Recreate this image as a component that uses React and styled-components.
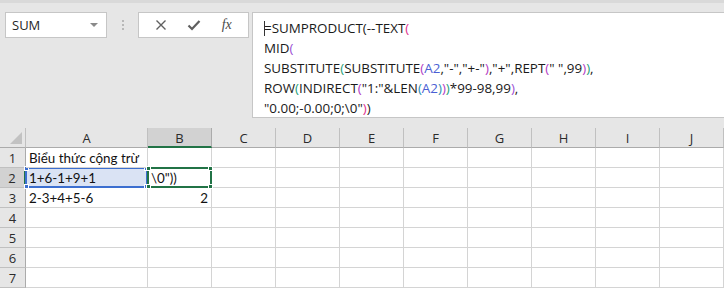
import styled, { createGlobalStyle } from "styled-components";

const GlobalStyle = createGlobalStyle`
  html, body {
    margin: 0;
    padding: 0;
    background: #ffffff;
  }
  * {
    box-sizing: border-box;
  }
`;

const UI_FONT = `"Open Sans", "Noto Sans", "DejaVu Sans", sans-serif`;
const CELL_FONT = `Lato, "Liberation Sans", sans-serif`;

const C_BLACK = "#1a1a1a";
const C_PINK = "#e0308e";
const C_PURPLE = "#9c4fd4";
const C_GREEN = "#1e9e78";
const C_VIOLET = "#b23ac4";
const C_TEAL = "#2d8fb0";
const C_REF = "#4b5fd4";

const Page = styled.div`
  width: 724px;
  height: 288px;
  overflow: hidden;
  background: #ffffff;
`;

const TopBar = styled.div`
  height: 128px;
  background: #e6e6e6;
  border-top: 3px solid #d9d9d9;
  display: flex;
  align-items: flex-start;
  padding: 9px 0 0 5px;
`;

const NameBox = styled.div`
  width: 102px;
  height: 26px;
  background: #ffffff;
  border: 1px solid #c6c6c6;
  display: flex;
  align-items: center;
  justify-content: space-between;
  padding: 0 6px 0 6px;
  font-family: ${UI_FONT};
  font-size: 13px;
  color: #262626;
`;

const DropArrow = styled.span`
  width: 0;
  height: 0;
  border-left: 4px solid transparent;
  border-right: 4px solid transparent;
  border-top: 4px solid #8a8a8a;
  margin-right: 2px;
`;

const Grip = styled.div`
  width: 31px;
  height: 26px;
  display: flex;
  flex-direction: column;
  align-items: center;
  justify-content: center;
  gap: 2px;

  span {
    width: 2px;
    height: 2px;
    background: #b8b8b8;
  }
`;

const FuncBox = styled.div`
  width: 111px;
  height: 26px;
  background: #ffffff;
  border: 1px solid #c6c6c6;
  display: flex;
  align-items: center;
  justify-content: space-around;
  padding: 0 6px;
`;

const FxLabel = styled.span`
  font-family: "Liberation Serif", serif;
  font-style: italic;
  font-size: 14px;
  color: #4a4a4a;
`;

const FormulaBox = styled.div`
  flex: 1;
  height: 106px;
  margin-left: 3px;
  background: #ffffff;
  border: 1px solid #c6c6c6;
  border-right: none;
  padding: 5px 0 0 11px;
  font-family: ${UI_FONT};
  font-size: 13.4px;
  color: ${C_BLACK};
`;

const FormulaLine = styled.div`
  height: 20px;
  line-height: 20px;
  white-space: pre;
  position: relative;
`;

const Caret = styled.span`
  position: absolute;
  left: 0;
  top: 3px;
  width: 1px;
  height: 15px;
  background: #333;
`;

const Tok = styled.span`
  color: ${(p) => p.$c || C_BLACK};
`;

const Sheet = styled.div`
  display: grid;
  grid-template-columns: 26px 122px repeat(9, 64px);
  grid-auto-rows: 20px;
`;

const Corner = styled.div`
  background: #e6e6e6;
  border-right: 1px solid #c0c0c0;
  border-bottom: 1px solid #ababab;
  position: relative;

  &::after {
    content: "";
    position: absolute;
    right: 3px;
    bottom: 3px;
    width: 0;
    height: 0;
    border-left: 12px solid transparent;
    border-bottom: 12px solid #c2c2c2;
  }
`;

const ColHead = styled.div`
  background: ${(p) => (p.$active ? "#d2d2d2" : "#e6e6e6")};
  border-right: 1px solid ${(p) => (p.$active ? "#ababab" : "#c0c0c0")};
  border-bottom: ${(p) => (p.$active ? "2px solid #217346" : "1px solid #ababab")};
  display: flex;
  align-items: center;
  justify-content: center;
  padding-top: ${(p) => (p.$active ? "1px" : "0")};
  font-family: ${UI_FONT};
  font-size: 13px;
  color: #2b2b2b;
`;

const RowHead = styled.div`
  background: ${(p) => (p.$active ? "#d2d2d2" : "#e6e6e6")};
  border-right: ${(p) => (p.$active ? "2px solid #217346" : "1px solid #ababab")};
  border-bottom: 1px solid #c0c0c0;
  display: flex;
  align-items: center;
  justify-content: center;
  font-family: ${UI_FONT};
  font-size: 13px;
  color: #2b2b2b;
`;

const Cell = styled.div`
  position: relative;
  background: ${(p) => (p.$refd ? "#dae3f4" : "#ffffff")};
  border-right: 1px solid #d4d4d4;
  border-bottom: 1px solid #d4d4d4;
  display: flex;
  align-items: flex-end;
  justify-content: ${(p) => (p.$right ? "flex-end" : "flex-start")};
  padding: 0 3px 1px 3px;
  font-family: ${CELL_FONT};
  font-size: 13.4px;
  color: #111;
  white-space: nowrap;
  overflow: visible;
  z-index: ${(p) => (p.$over ? 1 : 0)};
`;

const Frame = styled.div`
  position: absolute;
  left: -1px;
  top: -1px;
  right: -1px;
  bottom: -1px;
  border: 2px solid ${(p) => p.$color};
  pointer-events: none;

  span {
    position: absolute;
    width: 5px;
    height: 5px;
    background: ${(p) => p.$color};
    border: 1px solid #ffffff;
  }
  span:nth-child(1) { left: -3px; top: -3px; }
  span:nth-child(2) { right: -3px; top: -3px; }
  span:nth-child(3) { left: -3px; bottom: -3px; }
  span:nth-child(4) { right: -3px; bottom: -3px; }
`;

const formula = [
  [["=SUMPRODUCT("], ["--TEXT"], ["(", C_PINK]],
  [["MID"], ["(", C_PURPLE]],
  [
    ["SUBSTITUTE"], ["(", C_GREEN], ["SUBSTITUTE"], ["(", C_VIOLET],
    ["A2", C_REF], [',"-","+-"'], [")", C_VIOLET], [',"+",REPT'],
    ["(", C_VIOLET], ['" ",99'], [")", C_VIOLET], [")", C_GREEN], [","],
  ],
  [
    ["ROW"], ["(", C_GREEN], ["INDIRECT"], ["(", C_VIOLET], ['"1:"&LEN'],
    ["(", C_TEAL], ["A2", C_REF], [")", C_TEAL], [")", C_VIOLET],
    [")", C_GREEN], ["*99-98,99"], [")", C_PURPLE], [","],
  ],
  [['"0.00;-0.00;0;\\0"'], [")", C_PINK], [")"]],
];

const cols = ["A", "B", "C", "D", "E", "F", "G", "H", "I", "J"];

const cells = {
  "A1": { text: "Biểu thức cộng trừ", over: true },
  "A2": { text: "1+6-1+9+1", refd: true },
  "B2": { text: '\\0"))', editing: true },
  "A3": { text: "2-3+4+5-6" },
  "B3": { text: "2", right: true },
};

function Cross() {
  return (
    <svg width="12" height="12" viewBox="0 0 12 12">
      <path d="M1.5 1.5 L10.5 10.5 M10.5 1.5 L1.5 10.5" stroke="#5f5f5f" strokeWidth="1.4" />
    </svg>
  );
}

function Check() {
  return (
    <svg width="14" height="12" viewBox="0 0 14 12">
      <path d="M1.5 6.5 L5 10 L12.5 2" stroke="#5f5f5f" strokeWidth="2.2" fill="none" />
    </svg>
  );
}

function Handles() {
  return (
    <>
      <span />
      <span />
      <span />
      <span />
    </>
  );
}

export default function App() {
  return (
    <Page>
      <GlobalStyle />
      <TopBar>
        <NameBox>
          SUM
          <DropArrow />
        </NameBox>
        <Grip>
          <span />
          <span />
          <span />
        </Grip>
        <FuncBox>
          <Cross />
          <Check />
          <FxLabel>fx</FxLabel>
        </FuncBox>
        <FormulaBox>
          {formula.map((line, i) => (
            <FormulaLine key={i}>
              {i === 0 && <Caret />}
              {line.map(([t, c], j) => (
                <Tok key={j} $c={c}>
                  {t}
                </Tok>
              ))}
            </FormulaLine>
          ))}
        </FormulaBox>
      </TopBar>
      <Sheet>
        <Corner />
        {cols.map((c) => (
          <ColHead key={c} $active={c === "B"}>
            {c}
          </ColHead>
        ))}
        {[1, 2, 3, 4, 5, 6, 7].map((r) => (
          <Row key={r} r={r} />
        ))}
      </Sheet>
    </Page>
  );
}

function Row({ r }) {
  return (
    <>
      <RowHead $active={r === 2}>{r}</RowHead>
      {cols.map((c) => {
        const d = cells[c + r] || {};
        return (
          <Cell key={c} $refd={d.refd} $right={d.right} $over={d.over || d.editing}>
            {d.text}
            {d.refd && (
              <Frame $color="#3c6fd0">
                <Handles />
              </Frame>
            )}
            {d.editing && (
              <Frame $color="#217346">
                <Handles />
              </Frame>
            )}
          </Cell>
        );
      })}
    </>
  );
}
